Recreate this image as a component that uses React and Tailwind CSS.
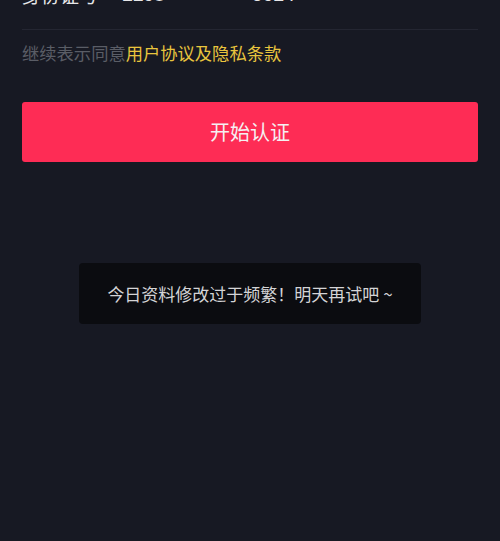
import React from "react";

export default function App() {
  return (
    <div
      className="w-[500px] h-[541px] overflow-hidden bg-[#171923] px-[22px]"
      style={{ fontFamily: '"Noto Sans CJK SC", "Noto Sans", sans-serif' }}
    >
      <div className="mt-[-38px] h-[68px] flex items-center border-b border-[#242632] text-[19px] text-[#e6e6e8]">
        <span className="w-[100px]">身份证号</span>
        <span className="w-[130px]" style={{ fontFamily: "Roboto, sans-serif" }}>2208</span>
        <span style={{ fontFamily: "Roboto, sans-serif" }}>3024</span>
      </div>
      <p className="mt-[11px] text-[17.3px] leading-[24px] text-[#5a5d66]">
        继续表示同意<span className="text-[#e9c53e]">用户协议及隐私条款</span>
      </p>
      <button className="mt-[37px] w-full h-[60px] rounded-[3px] bg-[#fe2c55] text-[20px] text-[#f5f0f2] flex items-center justify-center">
        开始认证
      </button>
      <div className="mt-[101px] flex justify-center">
        <div className="w-[342px] h-[61px] rounded-[4px] bg-[#0b0c10] flex items-center justify-center text-[17px] text-[#d4d4d6]">
          今日资料修改过于频繁！明天再试吧 ~
        </div>
      </div>
    </div>
  );
}
